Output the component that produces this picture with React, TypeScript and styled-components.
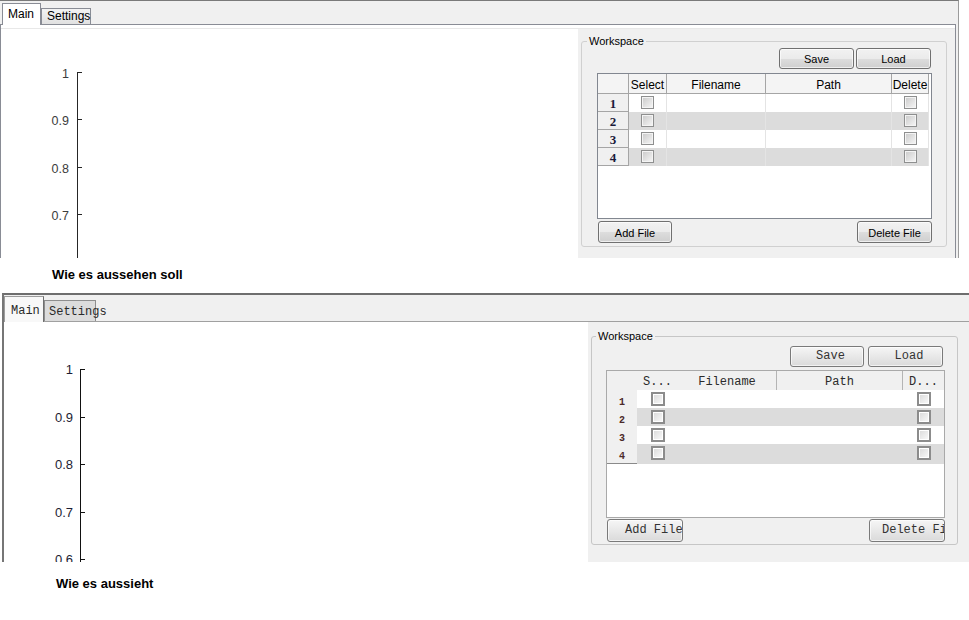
import React from 'react';
import styled, {createGlobalStyle, ThemeProvider, useTheme} from 'styled-components';

const sans = '"Liberation Sans", Arial, sans-serif';
const mono = '"Liberation Mono", "Courier New", monospace';
const serif = '"Liberation Serif", "Times New Roman", serif';

interface TabLook {
    width: number;
    height: number;
    padTop: number;
    padLeft: number;
    background: string;
    border: string;
    borderRight: string;
}

interface ButtonSize {
    w: number;
    h: number;
    lead?: number;
}

interface Look {
    window: {left: number; width: number; top: string; side: string; right: string};
    strip: {height: number; padLeft: number};
    tabFont: string;
    tabColor: string;
    tabs: {active: TabLook; idle: TabLook};
    panel: {top: string; side: string; marginRight: number; inset: number; rule: string; height: number};
    chart: {
        width: number;
        height: number;
        axisX: number;
        firstTick: number;
        step: number;
        labelX: number;
        baseline: number;
        fontSize: number;
        color: string;
        stroke: string;
    };
    pane: {padTop: number; padLeft: number};
    group: {width: number; height: number; border: string; legendLeft: number; padding: string};
    buttons: {
        gap: number;
        endPad: number;
        startPad: number;
        tableGap: number;
        footGap: number;
        border: string;
        background: string;
        font: string;
        color: string;
        padTop: number;
        padLeft: number;
        padRight: number;
        save: ButtonSize;
        load: ButtonSize;
        add: ButtonSize;
        remove: ButtonSize;
    };
    table: {
        columns: string;
        height: number;
        border: string;
        headHeight: number;
        headBackground: string;
        headLine: string;
        headRules: boolean[];
        headRule: string;
        headFont: string;
        headPadTop: number;
        headColor: string;
        rowHeight: number;
        rowHeadBackground: string;
        rowHeadRight: string;
        rowHeadLine: string;
        rowHeadLineAll: boolean;
        numberFont: string;
        numberColor: string;
        numberPadTop: number;
        cellRule: string;
        stripe: string;
    };
    check: {size: number; border: string; background: string; shadow: string; top: number};
}

declare module 'styled-components' {
    // eslint-disable-next-line @typescript-eslint/no-empty-interface
    export interface DefaultTheme extends Look {}
}

// Native Windows rendering of the figure
const nativeLook: Look = {
    window: {left: 0, width: 959, top: '1px solid #7a7a7a', side: '0', right: '1px solid #9b9b9b'},
    strip: {height: 23, padLeft: 2},
    tabFont: `12px/15px ${sans}`,
    tabColor: '#000',
    tabs: {
        active: {width: 39, height: 22, padTop: 3, padLeft: 5, background: '#fff', border: '#898c95', borderRight: '#898c95'},
        idle: {
            width: 50,
            height: 16,
            padTop: 0,
            padLeft: 5,
            background: 'linear-gradient(#f3f3f3, #e1e1e1)',
            border: '#898c95',
            borderRight: '#898c95',
        },
    },
    panel: {top: '1px solid #898c95', side: '1px solid #898c95', marginRight: 2, inset: 3, rule: '1px solid #e8e8e8', height: 230},
    chart: {
        width: 577,
        height: 229,
        axisX: 76,
        firstTick: 43,
        step: 47.25,
        labelX: 68,
        baseline: 5.5,
        fontSize: 12.5,
        color: '#3c3c3c',
        stroke: '#262626',
    },
    pane: {padTop: 6, padLeft: 3},
    group: {width: 366, height: 212, border: '1px solid #d0d0d0', legendLeft: 5, padding: '0 14px 3px 15px'},
    buttons: {
        gap: 2,
        endPad: 1,
        startPad: 1,
        tableGap: 4,
        footGap: 2,
        border: '1px solid #707070',
        background: 'linear-gradient(#f2f2f2 0%, #ebebeb 50%, #dddddd 51%, #cfcfcf 100%)',
        font: `11px ${sans}`,
        color: '#000',
        padTop: 2,
        padLeft: 0,
        padRight: 0,
        save: {w: 75, h: 21},
        load: {w: 75, h: 21},
        add: {w: 74, h: 22},
        remove: {w: 75, h: 22},
    },
    table: {
        columns: '31px 38px 99px 126px 37px 1fr',
        height: 146,
        border: '1px solid #828790',
        headHeight: 20,
        headBackground: '#f4f4f4',
        headLine: '1px solid #a5a5a5',
        headRules: [true, true, true, true, true],
        headRule: '1px solid #a5a5a5',
        headFont: `12px/15px ${sans}`,
        headPadTop: 4,
        headColor: '#000',
        rowHeight: 18,
        rowHeadBackground: '#f0f0f0',
        rowHeadRight: '1px solid #a5a5a5',
        rowHeadLine: '1px solid #a5a5a5',
        rowHeadLineAll: true,
        numberFont: `bold 13px/15px ${serif}`,
        numberColor: '#1a1a3a',
        numberPadTop: 2,
        cellRule: '1px solid #e4e4e4',
        stripe: '#dcdcdc',
    },
    check: {
        size: 13,
        border: '1px solid #8e8f8f',
        background: 'linear-gradient(135deg, #c9c9c9 0%, #f7f7f7 100%)',
        shadow: 'inset 0 0 0 1px #f4f4f4',
        top: 2,
    },
};

// Java Swing rendering of the same figure
const javaLook: Look = {
    window: {left: 2, width: 1000, top: '2px solid #6e6e6e', side: '2px solid #767676', right: '0'},
    strip: {height: 26, padLeft: 0},
    tabFont: `12px/15px ${mono}`,
    tabColor: '#2a2a2a',
    tabs: {
        active: {width: 40, height: 26, padTop: 7, padLeft: 6, background: '#f8f8f8', border: '#9c9c9c', borderRight: '#6f6f6f'},
        idle: {width: 52, height: 21, padTop: 4, padLeft: 4, background: '#dcdcdc', border: '#8e8e8e', borderRight: '#8e8e8e'},
    },
    panel: {top: '1px solid #a0a0a0', side: '0', marginRight: 0, inset: 0, rule: 'none', height: 240},
    chart: {
        width: 584,
        height: 240,
        axisX: 76,
        firstTick: 47,
        step: 47.5,
        labelX: 69,
        baseline: 5,
        fontSize: 13,
        color: '#1d1d33',
        stroke: '#111',
    },
    pane: {padTop: 8, padLeft: 3},
    group: {width: 367, height: 215, border: '1px solid #c6c6c6', legendLeft: 4, padding: '3px 12px 2px 14px'},
    buttons: {
        gap: 4,
        endPad: 2,
        startPad: 1,
        tableGap: 3,
        footGap: 1,
        border: '1px solid #7a7a7a',
        background: 'linear-gradient(#f6f6f6, #dadada)',
        font: `12px ${mono}`,
        color: '#333',
        padTop: 0,
        padLeft: 10,
        padRight: 3,
        save: {w: 74, h: 21},
        load: {w: 75, h: 21},
        add: {w: 76, h: 23, lead: 17},
        remove: {w: 76, h: 23, lead: 12},
    },
    table: {
        columns: '30px 41px 99px 126px 41px 0px',
        height: 148,
        border: '1px solid #a9a9a9',
        headHeight: 19,
        headBackground: '#f0f0f0',
        headLine: 'none',
        headRules: [false, false, true, true, false],
        headRule: '1px solid #b4b4b4',
        headFont: `12px/15px ${mono}`,
        headPadTop: 4,
        headColor: '#2b2b2b',
        rowHeight: 18,
        rowHeadBackground: '#f0f0f0',
        rowHeadRight: 'none',
        rowHeadLine: '1px solid #8a8a8a',
        rowHeadLineAll: false,
        numberFont: `bold 10px/12px ${mono}`,
        numberColor: '#4b2a2a',
        numberPadTop: 7,
        cellRule: 'none',
        stripe: '#dcdcdc',
    },
    check: {
        size: 14,
        border: '2px solid #8c8c8c',
        background: 'linear-gradient(135deg, #d9d9d9 0%, #fbfbfb 100%)',
        shadow: 'inset 0 0 0 1px #ffffff',
        top: 2,
    },
};

const GlobalStyle = createGlobalStyle`
    *, *::before, *::after {
        box-sizing: border-box;
    }
    html, body {
        margin: 0;
        padding: 0;
        background: #fff;
        overflow: hidden;
    }
    body {
        font-family: ${sans};
    }
`;

const Page = styled.main`
    display: flex;
    flex-direction: column;
    align-items: flex-start;
    width: 969px;
    height: 620px;
    overflow: hidden;
    background: #fff;
`;

const Window = styled.section`
    flex-shrink: 0;
    width: ${({theme}) => theme.window.width}px;
    margin-left: ${({theme}) => theme.window.left}px;
    border-top: ${({theme}) => theme.window.top};
    border-left: ${({theme}) => theme.window.side};
    border-right: ${({theme}) => theme.window.right};
    background: #f0f0f0;
`;

const TabStrip = styled.div`
    position: relative;
    z-index: 1;
    display: flex;
    align-items: flex-end;
    height: ${({theme}) => theme.strip.height}px;
    padding-left: ${({theme}) => theme.strip.padLeft}px;
`;

const Tab = styled.div<{$active?: boolean}>`
    flex-shrink: 0;
    width: ${({theme, $active}) => theme.tabs[$active ? 'active' : 'idle'].width}px;
    height: ${({theme, $active}) => theme.tabs[$active ? 'active' : 'idle'].height}px;
    margin-bottom: ${({$active}) => ($active ? -1 : 0)}px;
    padding: ${({theme, $active}) => theme.tabs[$active ? 'active' : 'idle'].padTop}px 0 0
        ${({theme, $active}) => theme.tabs[$active ? 'active' : 'idle'].padLeft}px;
    border: 1px solid ${({theme, $active}) => theme.tabs[$active ? 'active' : 'idle'].border};
    border-right-color: ${({theme, $active}) => theme.tabs[$active ? 'active' : 'idle'].borderRight};
    border-bottom: none;
    background: ${({theme, $active}) => theme.tabs[$active ? 'active' : 'idle'].background};
    font: ${({theme}) => theme.tabFont};
    color: ${({theme}) => theme.tabColor};
    white-space: nowrap;
`;

const Panel = styled.div`
    margin-right: ${({theme}) => theme.panel.marginRight}px;
    padding-top: ${({theme}) => theme.panel.inset}px;
    border-top: ${({theme}) => theme.panel.top};
    border-left: ${({theme}) => theme.panel.side};
    border-right: ${({theme}) => theme.panel.side};
    background: #fff;
`;

const Body = styled.div`
    display: flex;
    height: ${({theme}) => theme.panel.height}px;
    border-top: ${({theme}) => theme.panel.rule};
`;

const ChartArea = styled.div`
    flex-shrink: 0;
    width: ${({theme}) => theme.chart.width}px;
    overflow: hidden;
    background: #fff;

    svg {
        display: block;
    }
`;

const Pane = styled.div`
    flex: 1;
    padding: ${({theme}) => theme.pane.padTop}px 0 0 ${({theme}) => theme.pane.padLeft}px;
    background: #f0f0f0;
`;

const GroupBox = styled.fieldset`
    width: ${({theme}) => theme.group.width}px;
    height: ${({theme}) => theme.group.height}px;
    min-width: 0;
    margin: 0;
    padding: 0;
    border: ${({theme}) => theme.group.border};
    border-radius: 3px;
`;

const Legend = styled.legend`
    margin-left: ${({theme}) => theme.group.legendLeft}px;
    padding: 0 2px;
    font: 11px/13px ${sans};
    color: #000;
`;

const GroupBody = styled.div`
    display: flex;
    flex-direction: column;
    padding: ${({theme}) => theme.group.padding};
`;

const TopButtons = styled.div`
    display: flex;
    justify-content: flex-end;
    gap: ${({theme}) => theme.buttons.gap}px;
    padding-right: ${({theme}) => theme.buttons.endPad}px;
`;

const BottomButtons = styled.div`
    display: flex;
    justify-content: space-between;
    margin-top: ${({theme}) => theme.buttons.footGap}px;
    padding-left: ${({theme}) => theme.buttons.startPad}px;
`;

const Button = styled.button<{$size: ButtonSize}>`
    display: block;
    flex-shrink: 0;
    width: ${({$size}) => $size.w}px;
    height: ${({$size}) => $size.h}px;
    margin: 0;
    padding: ${({theme}) => theme.buttons.padTop}px ${({theme}) => theme.buttons.padRight}px 0
        ${({theme, $size}) => $size.lead ?? theme.buttons.padLeft}px;
    border: ${({theme}) => theme.buttons.border};
    border-radius: 3px;
    background: ${({theme}) => theme.buttons.background};
    box-shadow: inset 0 0 0 1px rgba(255, 255, 255, 0.65);
    font: ${({theme}) => theme.buttons.font};
    line-height: ${({theme, $size}) => $size.h - 2 - theme.buttons.padTop}px;
    color: ${({theme}) => theme.buttons.color};
    text-align: center;
    white-space: nowrap;
    overflow: hidden;
`;

const Grid = styled.div`
    display: flex;
    flex-direction: column;
    height: ${({theme}) => theme.table.height}px;
    margin-top: ${({theme}) => theme.buttons.tableGap}px;
    border: ${({theme}) => theme.table.border};
    background: #fff;
`;

const HeadRow = styled.div`
    display: grid;
    flex-shrink: 0;
    grid-template-columns: ${({theme}) => theme.table.columns};
    height: ${({theme}) => theme.table.headHeight}px;
`;

const DataRow = styled.div`
    display: grid;
    flex-shrink: 0;
    grid-template-columns: ${({theme}) => theme.table.columns};
    height: ${({theme}) => theme.table.rowHeight}px;
`;

const HeadCell = styled.div<{$rule: boolean}>`
    padding-top: ${({theme}) => theme.table.headPadTop}px;
    overflow: hidden;
    white-space: nowrap;
    text-align: center;
    font: ${({theme}) => theme.table.headFont};
    color: ${({theme}) => theme.table.headColor};
    background: ${({theme}) => theme.table.headBackground};
    border-bottom: ${({theme}) => theme.table.headLine};
    border-right: ${({theme, $rule}) => ($rule ? theme.table.headRule : 'none')};
`;

const RowHead = styled.div<{$line: boolean}>`
    padding-top: ${({theme}) => theme.table.numberPadTop}px;
    text-align: center;
    font: ${({theme}) => theme.table.numberFont};
    color: ${({theme}) => theme.table.numberColor};
    background: ${({theme}) => theme.table.rowHeadBackground};
    border-right: ${({theme}) => theme.table.rowHeadRight};
    border-bottom: ${({theme, $line}) => ($line ? theme.table.rowHeadLine : 'none')};
`;

const Cell = styled.div<{$stripe: boolean}>`
    display: flex;
    justify-content: center;
    align-items: flex-start;
    padding-top: ${({theme}) => theme.check.top}px;
    background: ${({theme, $stripe}) => ($stripe ? theme.table.stripe : '#fff')};
    border-right: ${({theme}) => theme.table.cellRule};
`;

const Filler = styled.div`
    background: #fff;
`;

const Check = styled.span`
    display: block;
    width: ${({theme}) => theme.check.size}px;
    height: ${({theme}) => theme.check.size}px;
    border: ${({theme}) => theme.check.border};
    background: ${({theme}) => theme.check.background};
    box-shadow: ${({theme}) => theme.check.shadow};
`;

const Caption = styled.p<{$top: number; $left: number; $bottom?: number}>`
    margin: ${({$top}) => $top}px 0 ${({$bottom}) => $bottom ?? 0}px ${({$left}) => $left}px;
    font: bold 13px/16px ${sans};
    color: #000;
`;

const ROWS = [1, 2, 3, 4];
const CHECK_COLUMNS = [0, 3];
const TICKS = ['1', '0.9', '0.8', '0.7', '0.6'];

function AxisDrawing() {
    const {chart} = useTheme();
    const x = chart.axisX + 0.5;

    return (
        <svg width={120} height={chart.height}>
            <g shapeRendering="crispEdges" stroke={chart.stroke} strokeWidth={1}>
                <line x1={x} y1={chart.firstTick} x2={x} y2={chart.height} />
                {TICKS.map((label, i) => {
                    const y = Math.round(chart.firstTick + i * chart.step) + 0.5;
                    return <line key={label} x1={chart.axisX} y1={y} x2={chart.axisX + 5} y2={y} />;
                })}
            </g>
            {TICKS.map((label, i) => (
                <text
                    key={label}
                    x={chart.labelX}
                    y={Math.round(chart.firstTick + i * chart.step) + chart.baseline}
                    textAnchor="end"
                    fontFamily={sans}
                    fontSize={chart.fontSize}
                    fill={chart.color}
                >
                    {label}
                </text>
            ))}
        </svg>
    );
}

function Workspace({headers}: {headers: string[]}) {
    const {table, buttons} = useTheme();

    return (
        <Pane>
            <GroupBox>
                <Legend>Workspace</Legend>
                <GroupBody>
                    <TopButtons>
                        <Button $size={buttons.save}>Save</Button>
                        <Button $size={buttons.load}>Load</Button>
                    </TopButtons>
                    <Grid>
                        <HeadRow>
                            <HeadCell $rule={table.headRules[0]} />
                            {headers.map((title, i) => (
                                <HeadCell key={title} $rule={table.headRules[i + 1]}>
                                    {title}
                                </HeadCell>
                            ))}
                            <Filler />
                        </HeadRow>
                        {ROWS.map((n, r) => (
                            <DataRow key={n}>
                                <RowHead $line={table.rowHeadLineAll || r === ROWS.length - 1}>{n}</RowHead>
                                {headers.map((title, i) => (
                                    <Cell key={title} $stripe={r % 2 === 1}>
                                        {CHECK_COLUMNS.includes(i) && <Check />}
                                    </Cell>
                                ))}
                                <Filler />
                            </DataRow>
                        ))}
                    </Grid>
                    <BottomButtons>
                        <Button $size={buttons.add}>Add File</Button>
                        <Button $size={buttons.remove}>Delete File</Button>
                    </BottomButtons>
                </GroupBody>
            </GroupBox>
        </Pane>
    );
}

function FigureWindow({headers}: {headers: string[]}) {
    return (
        <Window>
            <TabStrip>
                <Tab $active>Main</Tab>
                <Tab>Settings</Tab>
            </TabStrip>
            <Panel>
                <Body>
                    <ChartArea>
                        <AxisDrawing />
                    </ChartArea>
                    <Workspace headers={headers} />
                </Body>
            </Panel>
        </Window>
    );
}

export default function App() {
    return (
        <>
            <GlobalStyle />
            <Page>
                <ThemeProvider theme={nativeLook}>
                    <FigureWindow headers={['Select', 'Filename', 'Path', 'Delete']} />
                </ThemeProvider>
                <Caption $top={9} $bottom={10} $left={52}>
                    Wie es aussehen soll
                </Caption>
                <ThemeProvider theme={javaLook}>
                    <FigureWindow headers={['S...', 'Filename', 'Path', 'D...']} />
                </ThemeProvider>
                <Caption $top={14} $left={56}>
                    Wie es aussieht
                </Caption>
            </Page>
        </>
    );
}
